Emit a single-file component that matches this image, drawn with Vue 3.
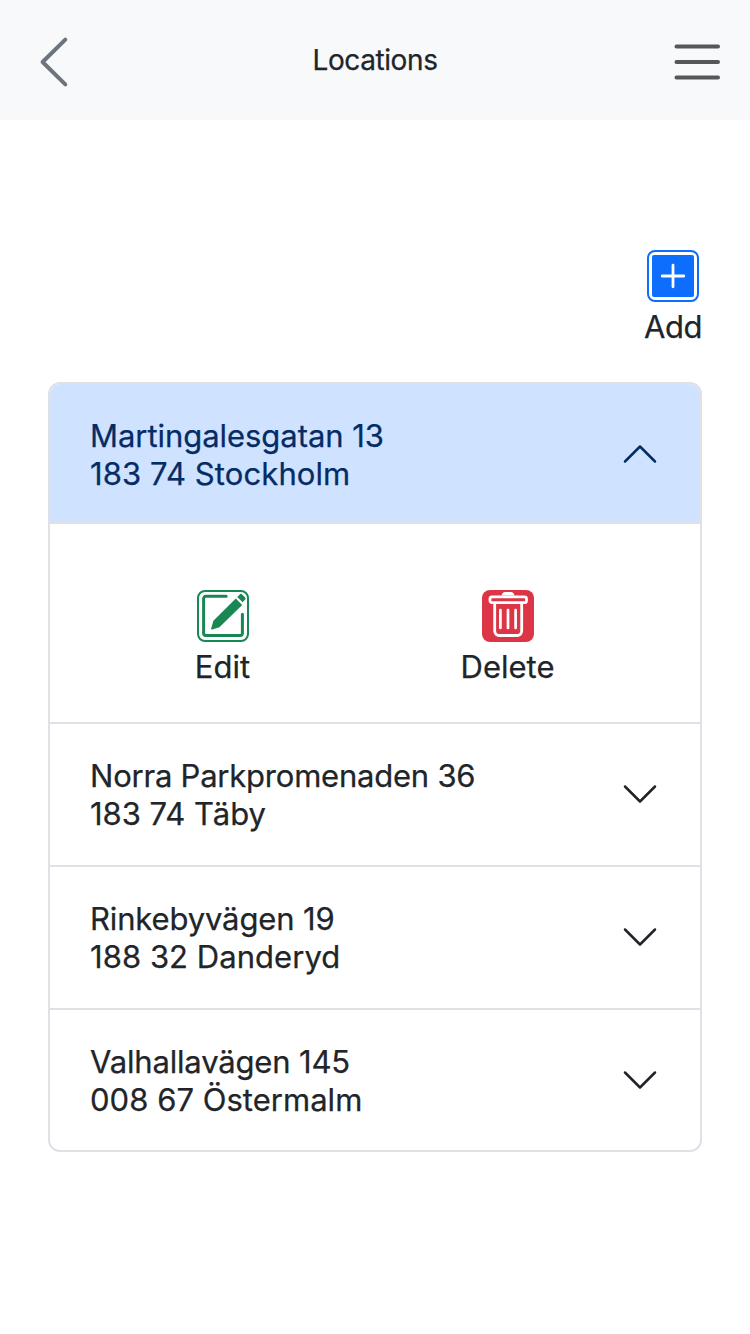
<script setup>
import { ref } from 'vue'

const locations = [
  { id: 1, street: 'Martingalesgatan 13', city: '183 74 Stockholm', tracking: [-0.05, 0.1] },
  { id: 2, street: 'Norra Parkpromenaden 36', city: '183 74 Täby', tracking: [-0.22, -0.02] },
  { id: 3, street: 'Rinkebyvägen 19', city: '188 32 Danderyd', tracking: [-0.14, 0.05] },
  { id: 4, street: 'Valhallavägen 145', city: '008 67 Östermalm', tracking: [-0.16, 0.03] },
]
const openId = ref(1)
const toggle = (id) => {
  openId.value = openId.value === id ? null : id
}
</script>

<template>
  <div class="page">
    <header class="topbar">
      <button class="plain" aria-label="Back">
        <svg class="back" width="30" height="52" viewBox="0 0 30 52">
          <path d="M26.3 3.6 3.6 26l22.7 22.4" />
        </svg>
      </button>
      <h1 class="title">Locations</h1>
      <button class="plain" aria-label="Menu">
        <svg class="menu" width="46" height="36" viewBox="0 0 46 36">
          <path d="M2.500 2.400h41.500M2.500 18h41.500M2.500 33.500h41.500" />
        </svg>
      </button>
    </header>

    <main class="content">
      <div class="toolbar">
        <button class="plain action">
          <svg width="52" height="52" viewBox="0 0 52 52" fill="none">
            <rect x="1" y="1" width="50" height="50" rx="7" stroke="#0d6efd" stroke-width="2" />
            <rect x="5" y="5" width="42" height="42" rx="2" fill="#0d6efd" />
            <path d="M26 15.2v21.6M15.2 26h21.6" stroke="#fff" stroke-width="2.8" stroke-linecap="round" />
          </svg>
          <span class="label add">Add</span>
        </button>
      </div>

      <section class="accordion">
        <article v-for="loc in locations" :key="loc.id" class="item" :class="{ open: openId === loc.id }">
          <button class="plain head" @click="toggle(loc.id)">
            <span class="address">
              <span :style="{ letterSpacing: loc.tracking[0] + 'px' }">{{ loc.street }}</span>
              <span :style="{ letterSpacing: loc.tracking[1] + 'px' }">{{ loc.city }}</span>
            </span>
            <svg class="chevron" width="40" height="40" viewBox="0 0 16 16">
              <path d="m2 5 6 6 6-6" />
            </svg>
          </button>
          <div v-if="openId === loc.id" class="body">
            <button class="plain action">
              <svg width="52" height="52" viewBox="0 0 52 52" fill="none">
                <rect x="1" y="1" width="50" height="50" rx="7" stroke="#198754" stroke-width="2" />
                <path d="M29.2 6.3H8.8a2.2 2.2 0 0 0-2.2 2.2v34.8a2.2 2.2 0 0 0 2.2 2.2h34.4a2.2 2.2 0 0 0 2.2-2.2V24.3" stroke="#198754" stroke-width="3" stroke-linecap="round" />
                <path d="m38.800 8.600 6.400 6.400-22.800 22.200-7.200 2.300c-.8.200-1.200-.2-1-1l2.200-7.700Z" fill="#198754" />
                <path d="m40.300 7.100 2.700-2.800c.6-.6 1.300-.6 1.900 0l3.300 3.200c.6.600.6 1.300 0 1.900l-2.600 2.800Z" fill="#198754" />
              </svg>
              <span class="label">Edit</span>
            </button>
            <button class="plain action">
              <svg width="52" height="52" viewBox="0 0 52 52" fill="none" stroke="#fff">
                <rect width="52" height="52" rx="8" fill="#dc3545" stroke="none" />
                <path d="M19.500 5.500c.5-2 1.800-3.500 3.500-3.500h6c1.700 0 3 1.500 3.500 3.500Z" fill="#fff" stroke="none" />
                <rect x="8" y="6.900" width="36.500" height="5.800" rx="2" stroke-width="2.800" />
                <path d="M12.700 13v28a4.500 4.500 0 0 0 4.500 4.500h18a4.500 4.500 0 0 0 4.500-4.500V13" stroke-width="2.800" />
                <path d="M18.400 20v18M26 20v18M33.600 20v18" stroke-width="2.700" stroke-linecap="round" />
              </svg>
              <span class="label">Delete</span>
            </button>
          </div>
        </article>
      </section>
    </main>
  </div>
</template>

<style>
body {
  background: #fff;
}
</style>

<style scoped>
.page {
  box-sizing: border-box;
  min-height: 1334px;
  font-family: Inter, "Liberation Sans", sans-serif;
  font-size: 31px;
  color: #212529;
  -webkit-text-stroke: 0.25px currentColor;
}
.plain {
  display: flex;
  padding: 0;
  border: 0;
  background: none;
  font: inherit;
  color: inherit;
  text-align: left;
}
.topbar {
  box-sizing: border-box;
  height: 120px;
  padding: 4px 30px 0 39px;
  display: grid;
  grid-template-columns: 46px 1fr 46px;
  align-items: center;
  background: #f8f9fa;
}
.back {
  fill: none;
  stroke: #6c757d;
  stroke-width: 4;
  stroke-linecap: round;
  stroke-linejoin: round;
}
.menu {
  stroke: #555759;
  stroke-width: 4;
  stroke-linecap: round;
}
.title {
  margin: 0;
  padding: 0 9px 4px 0;
  font-size: 28px;
  font-weight: 400;
  line-height: 34px;
  letter-spacing: -0.4px;
  text-align: center;
}
.content {
  padding: 130px 48px 0;
}
.toolbar {
  display: flex;
  justify-content: flex-end;
  height: 132px;
}
.toolbar .action {
  width: 58px;
}
.action {
  flex-direction: column;
  align-items: center;
}
.label {
  margin-top: 6px;
  line-height: 38px;
  white-space: nowrap;
}
.add {
  letter-spacing: -0.5px;
}
.accordion {
  border: 2px solid #dee2e6;
  border-radius: 12px;
  overflow: hidden;
}
.item + .item {
  padding-bottom: 1px;
  border-top: 2px solid #dee2e6;
}
.item + .item:last-child {
  padding-bottom: 0;
}
.head {
  box-sizing: border-box;
  width: 100%;
  height: 140px;
  padding: 0 40px;
  align-items: center;
  justify-content: space-between;
}
.open .head {
  background: #cfe2ff;
  color: #052c65;
  box-shadow: inset 0 -2px #dee2e6;
}
.address {
  display: flex;
  flex-direction: column;
  padding-top: 2px;
  line-height: 38px;
}
.chevron {
  fill: none;
  stroke: currentColor;
  stroke-linecap: round;
  stroke-linejoin: round;
}
.open .chevron {
  transform: rotate(180deg);
}
.body {
  box-sizing: border-box;
  height: 198px;
  padding: 66px 50px 0 30px;
  display: grid;
  grid-template-columns: 1fr 1fr;
  align-items: start;
}
</style>
